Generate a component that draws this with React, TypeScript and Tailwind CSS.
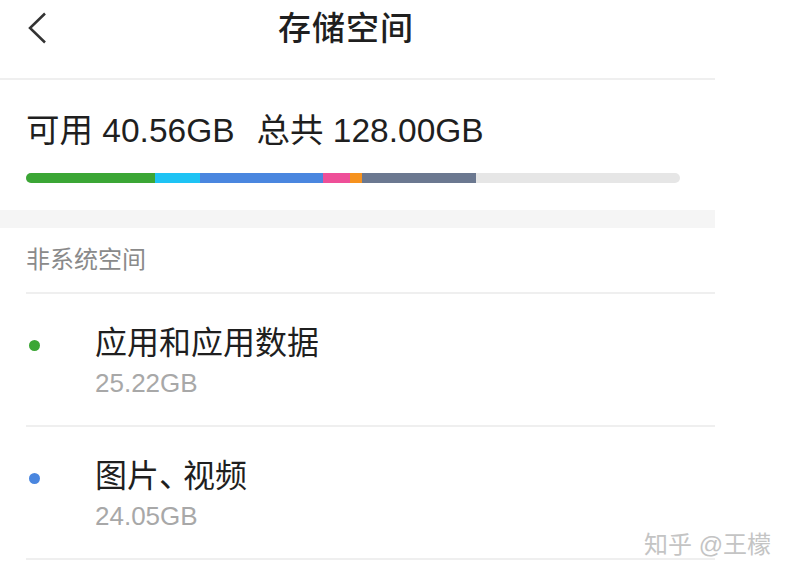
import React from 'react';

type Segment = { color: string; width: number };

const segments: Segment[] = [
  { color: 'bg-[#3ba635]', width: 129 },
  { color: 'bg-[#1ec3f4]', width: 45 },
  { color: 'bg-[#4a86df]', width: 123 },
  { color: 'bg-[#ee4f98]', width: 27 },
  { color: 'bg-[#f6921e]', width: 12 },
  { color: 'bg-[#6b7890]', width: 114 },
];

const items = [
  { name: '应用和应用数据', size: '25.22GB', dot: 'bg-[#3ba635]' },
  { name: '图片、视频', size: '24.05GB', dot: 'bg-[#4a86df]' },
];

const App: React.FC = () => {
  return (
    <div
      className="relative w-[788px] h-[578px] bg-white overflow-hidden text-[#1f1f1f]"
      style={{ fontFamily: '"Liberation Sans", "Noto Sans CJK SC", sans-serif' }}
    >
      <div className="w-[715px]">
        {/* header */}
        <div className="flex items-start h-[80px] border-b-2 border-[#efefef]">
          <svg className="ml-[27px] mt-[12px]" width="20" height="32" viewBox="0 0 20 32">
            <polyline points="18,1.5 3,16 18,30.5" fill="none" stroke="#333" strokeWidth="2.5" />
          </svg>
          <div className="ml-[231px] mt-[8px] text-[33px] leading-[42px] font-medium tracking-[1px]">存储空间</div>
        </div>

        {/* total */}
        <div className="px-[26px] pt-[30px] pb-[27px]">
          <div className="text-[33.5px] leading-[42px]">
            可用 40.56GB<span className="ml-[22px]">总共 128.00GB</span>
          </div>
          <div className="mt-[21px] flex w-[654px] h-[10px] rounded-full bg-[#e6e6e6] overflow-hidden">
            {segments.map((s, i) => (
              <div key={i} className={`${s.color} h-full shrink-0`} style={{ width: s.width }} />
            ))}
          </div>
        </div>

        <div className="h-[18px] bg-[#f5f5f5]" />

        {/* section */}
        <div className="ml-[26px]">
          <div className="py-[16px] text-[24px] leading-[32px] text-[#8a8a8a] border-b-2 border-[#efefef]">非系统空间</div>
          {items.map((it) => (
            <div key={it.name} className="flex items-start h-[133px] border-b-2 border-[#efefef]">
              <div className={`${it.dot} mt-[46px] ml-[3px] w-[11px] h-[11px] rounded-full`} />
              <div className="ml-[55px] pt-[28px]">
                <div className="text-[32px] leading-[42px]">
                  {it.name.split('、').map((part, i) => (
                    <React.Fragment key={i}>
                      {i > 0 && <span className="tracking-[-8px]">、</span>}
                      {part}
                    </React.Fragment>
                  ))}
                </div>
                <div className="mt-[2px] text-[26px] leading-[34px] text-[#a8a8a8]">{it.size}</div>
              </div>
            </div>
          ))}
        </div>
      </div>

      <div className="absolute left-[644px] top-[530px] text-[24px] leading-[30px] text-[#c4c4c4]">知乎 @王檬</div>
    </div>
  );
};

export default App;
